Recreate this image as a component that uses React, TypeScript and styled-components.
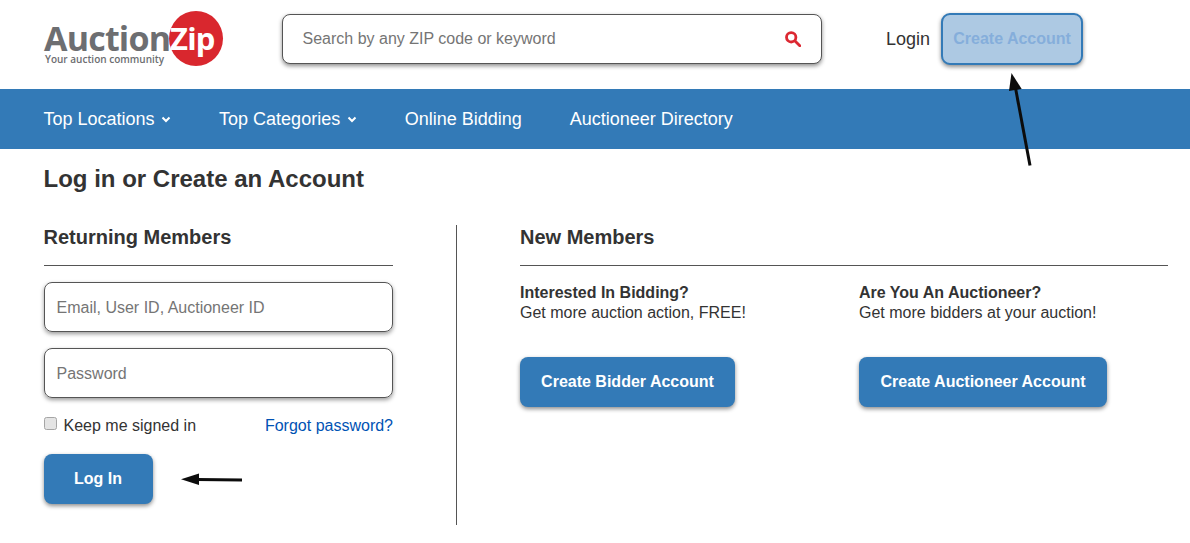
import React from 'react';
import styled, { createGlobalStyle } from 'styled-components';

const GlobalStyle = createGlobalStyle`
  html, body {
    margin: 0;
    padding: 0;
    background: #fff;
    color: #333;
    font-family: "Liberation Sans", Arial, sans-serif;
    overflow: hidden;
  }
  * { box-sizing: border-box; }
`;

const Page = styled.div`
  position: relative;
  width: 1190px;
  height: 543px;
  overflow: hidden;
`;

const Header = styled.header`
  height: 89px;
  display: flex;
  align-items: center;
  padding-left: 44px;
  padding-bottom: 11px;
`;

const Logo = styled.div`
  position: relative;
  width: 180px;
  height: 60px;
  margin-right: 58px;
  flex-shrink: 0;
`;

const LogoCircle = styled.div`
  position: absolute;
  left: 125px;
  top: 2px;
  width: 54px;
  height: 55px;
  border-radius: 50%;
  background: #d9272e;
`;

const LogoWord = styled.span`
  position: absolute;
  left: 0;
  top: 14px;
  font-family: "Open Sans", sans-serif;
  font-weight: 700;
  font-size: 34px;
  line-height: 30px;
  letter-spacing: -0.8px;
  color: #6d6e71;
`;

const LogoZip = styled.span`
  position: absolute;
  left: 126px;
  top: 14px;
  font-family: "Open Sans", sans-serif;
  font-weight: 700;
  font-size: 31px;
  line-height: 30px;
  letter-spacing: -0.8px;
  color: #fff;
`;

const LogoTag = styled.span`
  position: absolute;
  left: 1px;
  top: 45px;
  font-family: "Open Sans", sans-serif;
  font-weight: 600;
  font-size: 10px;
  line-height: 11px;
  color: #6d6e71;
`;

const SearchBox = styled.div`
  width: 540px;
  height: 50px;
  display: flex;
  align-items: center;
  justify-content: space-between;
  padding: 0 20px 0 19.5px;
  border: 1px solid #555;
  border-radius: 8px;
  box-shadow: 0 2px 4px rgba(0, 0, 0, 0.45);
  background: #fff;
  font-size: 16px;
`;

const SearchHint = styled.span`
  color: #757575;
`;

const LoginLink = styled.a`
  margin-left: 64px;
  margin-right: 11px;
  font-size: 18px;
  color: #333;
`;

const CreateButton = styled.button`
  width: 142px;
  height: 52px;
  padding: 0;
  border: 2px solid #337ab7;
  border-radius: 9px;
  background: #adc9e3;
  color: #85aedb;
  font-family: inherit;
  font-size: 16px;
  font-weight: 700;
  box-shadow: 0 2px 4px rgba(0, 0, 0, 0.45);
`;

const Nav = styled.nav`
  height: 60px;
  display: flex;
  align-items: center;
  gap: 48px;
  padding-left: 43.5px;
  background: #337ab7;
`;

const NavItem = styled.a`
  display: flex;
  align-items: center;
  gap: 6.5px;
  color: #fff;
  font-size: 18px;
`;

const Main = styled.main`
  padding: 0 22px 0 43.5px;
`;

const Title = styled.h1`
  margin: 0;
  padding-top: 16px;
  font-size: 24px;
  line-height: 28px;
  font-weight: 700;
  color: #333;
`;

const Columns = styled.div`
  display: flex;
  margin-top: 32px;
  height: 300px;
`;

const LeftColumn = styled.section`
  width: 349.5px;
  flex-shrink: 0;
`;

const Divider = styled.div`
  width: 1px;
  height: 300px;
  flex-shrink: 0;
  margin: 0 63px;
  background: #555;
`;

const RightColumn = styled.section`
  flex: 1;
  min-width: 0;
`;

const SectionHead = styled.h2`
  margin: 0 0 16px;
  height: 41px;
  border-bottom: 1px solid #555;
  font-size: 20px;
  line-height: 24px;
  font-weight: 700;
  color: #333;
`;

const Field = styled.div`
  height: 50px;
  margin-bottom: 16px;
  display: flex;
  align-items: center;
  padding: 1px 12px 0;
  border: 1px solid #555;
  border-radius: 8px;
  box-shadow: 0 2px 4px rgba(0, 0, 0, 0.4);
  color: #757575;
  font-size: 16px;
`;

const OptionsRow = styled.div`
  display: flex;
  align-items: center;
  justify-content: space-between;
  height: 24px;
  margin-top: 15px;
  font-size: 16px;
`;

const Keep = styled.label`
  display: flex;
  align-items: center;
  gap: 7px;
  color: #333;
`;

const CheckBox = styled.span`
  width: 13px;
  height: 13px;
  margin-top: -6px;
  border: 1px solid #a5a5a5;
  border-radius: 2.5px;
  background: #e4e4e4;
`;

const Forgot = styled.a`
  color: #0052b4;
`;

const PrimaryButton = styled.button<{ $width: number }>`
  display: block;
  height: 50px;
  width: ${props => props.$width}px;
  padding: 0;
  border: none;
  border-radius: 8px;
  background: #337ab7;
  color: #fff;
  font-family: inherit;
  font-size: 16px;
  font-weight: 700;
  box-shadow: 0 2px 4px rgba(0, 0, 0, 0.45);
`;

const LoginButtonWrap = styled.div`
  margin-top: 16px;
`;

const Offers = styled.div`
  display: grid;
  grid-template-columns: 339px 1fr;
`;

const Offer = styled.div`
  padding-top: 1px;
  font-size: 16px;
  line-height: 20px;
  color: #333;
`;

const OfferTitle = styled.div`
  font-weight: 700;
`;

const OfferButton = styled.div`
  margin-top: 34px;
`;

const Annotations = styled.svg`
  position: absolute;
  left: 0;
  top: 0;
  pointer-events: none;
`;

const Chevron = () => (
  <svg width="10" height="10" viewBox="0 0 10 10" fill="none" stroke="#fff" strokeWidth="2">
    <path d="M1.5 3.5 5 7l3.5-3.5" />
  </svg>
);

const SearchIcon = () => (
  <svg width="16" height="16" viewBox="0 0 16 16" fill="none" stroke="#dc2832">
    <circle cx="6.2" cy="6.3" r="4.7" strokeWidth="2.8" />
    <path d="M10 10l4.8 4.8" strokeWidth="2.8" strokeLinecap="round" />
  </svg>
);

export default function App() {
  return (
    <Page>
      <GlobalStyle />
      <Header>
        <Logo>
          <LogoCircle />
          <LogoWord>Auction</LogoWord>
          <LogoZip>Zip</LogoZip>
          <LogoTag>Your auction community</LogoTag>
        </Logo>
        <SearchBox>
          <SearchHint>Search by any ZIP code or keyword</SearchHint>
          <SearchIcon />
        </SearchBox>
        <LoginLink>Login</LoginLink>
        <CreateButton>Create Account</CreateButton>
      </Header>
      <Nav>
        <NavItem>Top Locations <Chevron /></NavItem>
        <NavItem>Top Categories <Chevron /></NavItem>
        <NavItem>Online Bidding</NavItem>
        <NavItem>Auctioneer Directory</NavItem>
      </Nav>
      <Main>
        <Title>Log in or Create an Account</Title>
        <Columns>
          <LeftColumn>
            <SectionHead>Returning Members</SectionHead>
            <Field>Email, User ID, Auctioneer ID</Field>
            <Field>Password</Field>
            <OptionsRow>
              <Keep><CheckBox />Keep me signed in</Keep>
              <Forgot>Forgot password?</Forgot>
            </OptionsRow>
            <LoginButtonWrap>
              <PrimaryButton $width={109}>Log In</PrimaryButton>
            </LoginButtonWrap>
          </LeftColumn>
          <Divider />
          <RightColumn>
            <SectionHead>New Members</SectionHead>
            <Offers>
              <Offer>
                <OfferTitle>Interested In Bidding?</OfferTitle>
                Get more auction action, FREE!
                <OfferButton>
                  <PrimaryButton $width={215}>Create Bidder Account</PrimaryButton>
                </OfferButton>
              </Offer>
              <Offer>
                <OfferTitle>Are You An Auctioneer?</OfferTitle>
                Get more bidders at your auction!
                <OfferButton>
                  <PrimaryButton $width={248}>Create Auctioneer Account</PrimaryButton>
                </OfferButton>
              </Offer>
            </Offers>
          </RightColumn>
        </Columns>
      </Main>
      <Annotations width="1190" height="543" viewBox="0 0 1190 543">
        <path d="M1030 165.5 1015.5 88" stroke="#0c0c0c" strokeWidth="3" fill="none" />
        <path d="M1011.5 73 1021.7 89 1009 91Z" fill="#0c0c0c" />
        <path d="M242 480 197 479.4" stroke="#0c0c0c" strokeWidth="3" fill="none" />
        <path d="M181 479.2 199 473.5 199 485Z" fill="#0c0c0c" />
      </Annotations>
    </Page>
  );
}
